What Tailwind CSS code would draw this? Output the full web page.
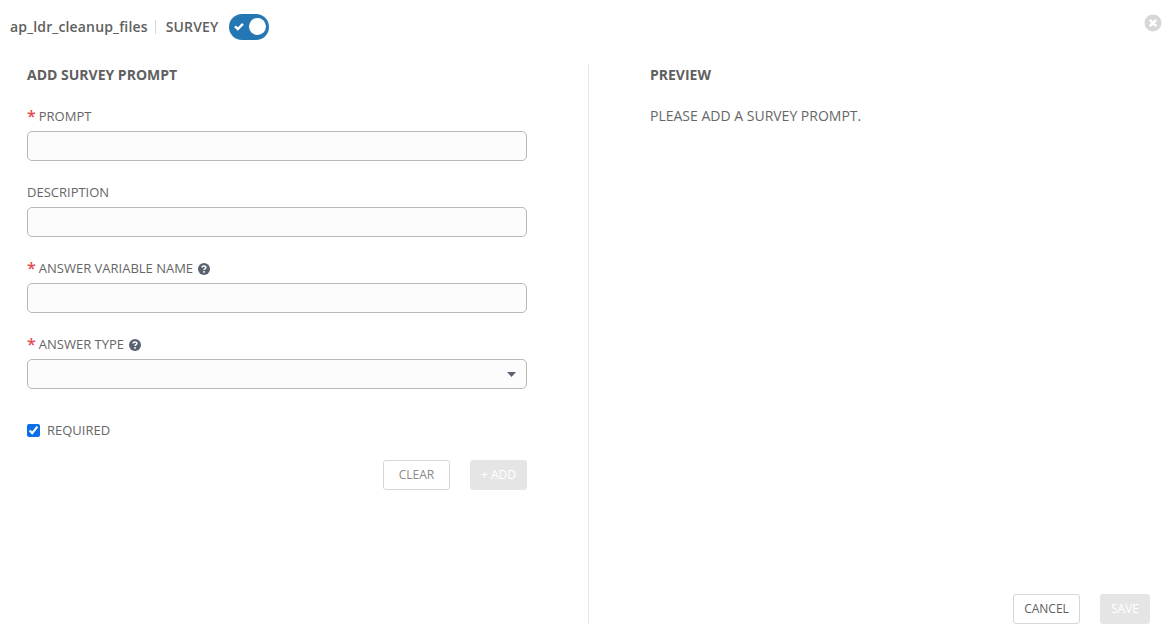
<!DOCTYPE html>
<html lang="en">
<head>
  <meta charset="UTF-8" />
  <title>Survey</title>
  <script src="https://cdn.jsdelivr.net/npm/@tailwindcss/browser@4"></script>
</head>
<body class="bg-white text-[#666666] antialiased font-['Open_Sans',sans-serif] w-[1174px] h-[635px] overflow-hidden">

  <!-- Header -->
  <div class="relative flex items-center h-[53px] pl-[10px]">
    <span class="text-[14px] tracking-[0.15px] font-semibold text-[#606060]">ap_ldr_cleanup_files</span>
    <span class="w-px h-[14px] bg-[#d7d7d7] ml-[7px] mr-[10px]"></span>
    <span class="text-[14px] tracking-[0.15px] font-semibold text-[#606060]">SURVEY</span>
    <span class="ml-[11px] w-[40px] h-[26px] rounded-full bg-[#2477b3] flex items-center justify-between pl-[5px] pr-[3px]">
      <svg width="10" height="9" viewBox="0 0 10 9"><path d="M1 4.4 L3.8 7 L9 1.8" fill="none" stroke="#fff" stroke-width="2.4"/></svg>
      <span class="w-[17px] h-[17px] rounded-full bg-white"></span>
    </span>
    <svg class="absolute left-[1144px] top-[14px]" width="18" height="18" viewBox="0 0 18 18">
      <circle cx="9" cy="9" r="8.5" fill="#d7d7d7"/>
      <path d="M5.8 5.8 L12.2 12.2 M12.2 5.8 L5.8 12.2" stroke="#fff" stroke-width="2.6"/>
    </svg>
  </div>

  <div class="flex h-[560px] mt-[11px]">
    <!-- Add survey prompt form -->
    <div class="w-[589px] shrink-0 border-r border-[#e8e8e8] pl-[27px] pt-[1px]">
      <h2 class="text-[14px] leading-[20px] font-bold text-[#606060]">ADD SURVEY PROMPT</h2>

      <div class="w-[500px] mt-[21px] flex flex-col gap-[21px]">
        <div>
          <label class="flex items-center h-[20px] pt-[1px] mb-[5px] text-[13px]"><span class="text-[#e5484d] text-[16px] font-semibold leading-[20px] mr-[3px] mt-[-1px]">*</span>PROMPT</label>
          <input type="text" class="block w-full h-[30px] bg-[#fcfcfc] border border-[#b7b7b7] rounded-[5px]" />
        </div>
        <div>
          <label class="flex items-center h-[20px] pt-[1px] mb-[5px] text-[13px]">DESCRIPTION</label>
          <input type="text" class="block w-full h-[30px] bg-[#fcfcfc] border border-[#b7b7b7] rounded-[5px]" />
        </div>
        <div>
          <label class="flex items-center h-[20px] pt-[1px] mb-[5px] text-[13px]"><span class="text-[#e5484d] text-[16px] font-semibold leading-[20px] mr-[3px] mt-[-1px]">*</span>ANSWER VARIABLE NAME
            <svg class="ml-[5px]" width="12" height="12" viewBox="0 0 12 12"><circle cx="6" cy="6" r="6" fill="#5a6270"/><path d="M4.1 4.6 C4.1 2.4 7.9 2.4 7.9 4.5 C7.9 5.8 6 5.7 6 7.1" fill="none" stroke="#fff" stroke-width="1.5"/><rect x="5.2" y="8.1" width="1.6" height="1.6" fill="#fff"/></svg>
          </label>
          <input type="text" class="block w-full h-[30px] bg-[#fcfcfc] border border-[#b7b7b7] rounded-[5px]" />
        </div>
        <div>
          <label class="flex items-center h-[20px] pt-[1px] mb-[5px] text-[13px]"><span class="text-[#e5484d] text-[16px] font-semibold leading-[20px] mr-[3px] mt-[-1px]">*</span>ANSWER TYPE
            <svg class="ml-[5px]" width="12" height="12" viewBox="0 0 12 12"><circle cx="6" cy="6" r="6" fill="#5a6270"/><path d="M4.1 4.6 C4.1 2.4 7.9 2.4 7.9 4.5 C7.9 5.8 6 5.7 6 7.1" fill="none" stroke="#fff" stroke-width="1.5"/><rect x="5.2" y="8.1" width="1.6" height="1.6" fill="#fff"/></svg>
          </label>
          <div class="flex items-center justify-end w-full h-[30px] bg-[#fcfcfc] border border-[#b7b7b7] rounded-[5px] pr-[10px]">
            <svg width="9" height="5" viewBox="0 0 9 5"><path d="M0 0 H9 L4.5 5 Z" fill="#5a6270"/></svg>
          </div>
        </div>

        <label class="flex items-center h-[20px] pt-[1px] mt-[10px] text-[13px]">
          <input type="checkbox" checked class="w-[13px] h-[13px] mr-[7px] accent-[#0b6fe8]" />REQUIRED
        </label>

        <div class="flex justify-end gap-[20px] mt-[-1px]">
          <button class="w-[67px] h-[30px] bg-white border border-[#d7d7d7] rounded-[3px] text-[12px] text-[#8a8a8a]">CLEAR</button>
          <button class="w-[57px] h-[30px] bg-[#e5e5e5] rounded-[3px] text-[12px] text-white">+ ADD</button>
        </div>
      </div>
    </div>

    <!-- Preview -->
    <div class="relative grow pl-[61px] pt-[1px]">
      <h2 class="text-[14px] leading-[20px] font-bold text-[#606060]">PREVIEW</h2>
      <p class="mt-[21px] text-[14px] leading-[20px]">PLEASE ADD A SURVEY PROMPT.</p>
      <div class="absolute right-[24px] bottom-0 flex gap-[20px]">
        <button class="w-[67px] h-[30px] bg-white border border-[#d7d7d7] rounded-[3px] text-[12px] text-[#606060]">CANCEL</button>
        <button class="w-[50px] h-[30px] bg-[#e5e5e5] rounded-[3px] text-[12px] text-white">SAVE</button>
      </div>
    </div>
  </div>
</body>
</html>
